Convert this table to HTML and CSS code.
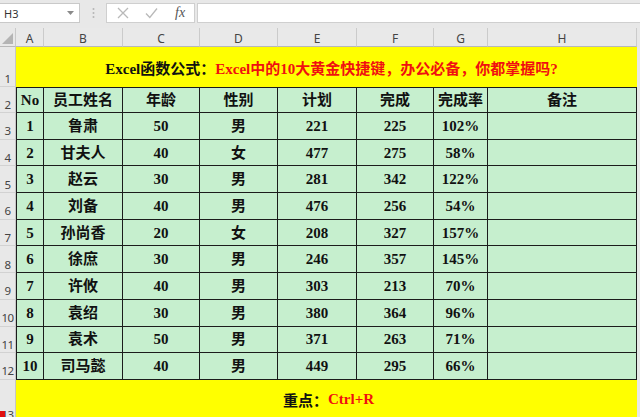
FILE: index.html
```html
<!DOCTYPE html>
<html lang="zh">
<head>
<meta charset="utf-8">
<title>Excel</title>
<link rel="stylesheet" href="styles.css">
</head>
<body>
<div class="app">
  <div class="formula-bar">
    <div class="namebox"><span>H3</span>
      <svg class="dd" width="7" height="5" viewBox="0 0 7 5"><polygon points="0,0 7,0 3.5,4" fill="#8a8a8a"/></svg>
    </div>
    <div class="grip">
      <svg width="3" height="12" viewBox="0 0 3 12"><circle cx="1.5" cy="2" r="1" fill="#b5b5b5"/><circle cx="1.5" cy="6" r="1" fill="#b5b5b5"/><circle cx="1.5" cy="10" r="1" fill="#b5b5b5"/></svg>
    </div>
    <div class="fx-box">
      <svg class="ico" width="12" height="12" viewBox="0 0 12 12"><path d="M1 1 L11 11 M11 1 L1 11" stroke="#b9b9b9" stroke-width="1.3" fill="none"/></svg>
      <svg class="ico" width="13" height="12" viewBox="0 0 13 12"><path d="M1 6.5 L4.8 10.5 L12 1.5" stroke="#b9b9b9" stroke-width="1.3" fill="none"/></svg>
      <span class="fx">fx</span>
    </div>
    <div class="input"></div>
  </div>

  <div class="sheet">
    <div class="corner"><svg width="11" height="11" viewBox="0 0 11 11"><polygon points="11,0 11,11 0,11" fill="#b4b4b4"/></svg></div>
    <div class="ch">A</div><div class="ch">B</div><div class="ch">C</div><div class="ch">D</div><div class="ch">E</div><div class="ch">F</div><div class="ch">G</div><div class="ch">H</div>

    <div class="rh">1</div>
    <div class="title span"><span class="k">Excel函数公式：</span><span class="r">Excel中的10大黄金快捷键，办公必备，你都掌握吗?</span></div>

    <div class="rh">2</div>
    <div class="c first top">No</div><div class="c top">员工姓名</div><div class="c top">年龄</div><div class="c top">性别</div><div class="c top">计划</div><div class="c top">完成</div><div class="c top">完成率</div><div class="c top">备注</div>

    <div class="rh">3</div>
    <div class="c first">1</div><div class="c">鲁肃</div><div class="c">50</div><div class="c">男</div><div class="c">221</div><div class="c">225</div><div class="c">102%</div><div class="c"></div>
    <div class="rh">4</div>
    <div class="c first">2</div><div class="c">甘夫人</div><div class="c">40</div><div class="c">女</div><div class="c">477</div><div class="c">275</div><div class="c">58%</div><div class="c"></div>
    <div class="rh">5</div>
    <div class="c first">3</div><div class="c">赵云</div><div class="c">30</div><div class="c">男</div><div class="c">281</div><div class="c">342</div><div class="c">122%</div><div class="c"></div>
    <div class="rh">6</div>
    <div class="c first">4</div><div class="c">刘备</div><div class="c">40</div><div class="c">男</div><div class="c">476</div><div class="c">256</div><div class="c">54%</div><div class="c"></div>
    <div class="rh">7</div>
    <div class="c first">5</div><div class="c">孙尚香</div><div class="c">20</div><div class="c">女</div><div class="c">208</div><div class="c">327</div><div class="c">157%</div><div class="c"></div>
    <div class="rh">8</div>
    <div class="c first">6</div><div class="c">徐庶</div><div class="c">30</div><div class="c">男</div><div class="c">246</div><div class="c">357</div><div class="c">145%</div><div class="c"></div>
    <div class="rh">9</div>
    <div class="c first">7</div><div class="c">许攸</div><div class="c">40</div><div class="c">男</div><div class="c">303</div><div class="c">213</div><div class="c">70%</div><div class="c"></div>
    <div class="rh">10</div>
    <div class="c first">8</div><div class="c">袁绍</div><div class="c">30</div><div class="c">男</div><div class="c">380</div><div class="c">364</div><div class="c">96%</div><div class="c"></div>
    <div class="rh">11</div>
    <div class="c first">9</div><div class="c">袁术</div><div class="c">50</div><div class="c">男</div><div class="c">371</div><div class="c">263</div><div class="c">71%</div><div class="c"></div>
    <div class="rh">12</div>
    <div class="c first">10</div><div class="c">司马懿</div><div class="c">40</div><div class="c">男</div><div class="c">449</div><div class="c">295</div><div class="c">66%</div><div class="c"></div>

    <div class="rh">13</div>
    <div class="title foot span"><span class="k">重点：</span><span class="r">Ctrl+R</span></div>
  </div>
  <div class="marker"></div>
</div>
</body>
</html>
```

FILE: styles.css
```css
* { box-sizing: border-box; }
html, body { margin: 0; padding: 0; }
body {
  width: 640px;
  height: 417px;
  overflow: hidden;
  background: #e8e8e8;
  font-family: "Noto Sans", "Noto Sans CJK SC", sans-serif;
}
.app { position: relative; width: 640px; height: 417px; overflow: hidden; }

.formula-bar {
  display: flex;
  align-items: flex-start;
  height: 28px;
  padding-top: 3px;
  background: #e8e8e8;
}
.namebox {
  width: 80px;
  height: 20px;
  background: #fff;
  border: 1px solid #c9c9c9;
  border-left: none;
  display: flex;
  align-items: center;
  justify-content: space-between;
  padding: 0 5px 0 4px;
  font-size: 11px;
  color: #333;
}
.namebox .dd { margin-top: 1px; }
.grip {
  width: 26px;
  height: 20px;
  display: flex;
  align-items: center;
  justify-content: center;
  padding-left: 1px;
}
.fx-box {
  width: 89px;
  height: 20px;
  background: #fff;
  border: 1px solid #cfcfcf;
  display: flex;
  align-items: center;
  padding-left: 10px;
  gap: 16px;
}
.fx {
  font-family: "Liberation Serif", serif;
  font-style: italic;
  font-size: 14px;
  color: #555;
  margin-left: 1px;
}
.input {
  flex: 1;
  height: 20px;
  margin-left: 2px;
  background: #fff;
  border: 1px solid #cfcfcf;
  border-right: none;
}

.sheet {
  display: grid;
  width: 637px;
  grid-template-columns: 16px 28px 79px 77px 78px 79px 77px 54px 149px;
  grid-template-rows: 19px 40px 26px repeat(10, 26.7px) 44px;
}
.corner {
  background: #e8e8e8;
  border-right: 1px solid #c9c9c9;
  border-bottom: 1px solid #b8b8b8;
  display: flex;
  align-items: flex-end;
  justify-content: flex-end;
  padding: 0 2px 2px 0;
}
.ch {
  background: #e9e9e9;
  border-right: 1px solid #cbcbcb;
  border-bottom: 1px solid #b8b8b8;
  color: #444;
  font-size: 12px;
  display: flex;
  align-items: center;
  justify-content: center;
  line-height: 1;
  padding-top: 4px;
}
.rh {
  background: #e8e8e8;
  border-right: 1px solid #c6c6c6;
  border-bottom: 1px solid #d2d2d2;
  color: #444;
  font-size: 11.5px;
  display: flex;
  align-items: flex-end;
  justify-content: center;
  line-height: 1;
  padding-bottom: 2px;
  letter-spacing: -0.5px;
}

.title {
  background: #ffff00;
  display: flex;
  align-items: center;
  justify-content: center;
  font-family: "Liberation Serif", "Noto Sans CJK SC", serif;
  font-weight: 700;
  font-size: 15px;
  padding-left: 10px;
}
.span { grid-column: 2 / 10; }
.foot { padding-left: 4px; padding-bottom: 4px; align-items: center; }
.k { color: #111; }
.r { color: #f01010; }

.c {
  background: #c6efce;
  border-right: 1px solid #1c1c1c;
  border-bottom: 1px solid #1c1c1c;
  display: flex;
  align-items: center;
  justify-content: center;
  font-family: "Liberation Serif", "Noto Sans CJK SC", serif;
  font-weight: 700;
  font-size: 15px;
  color: #111;
  padding-top: 1px;
  line-height: 1;
}
.c.first { border-left: 1px solid #1c1c1c; }
.c.top { border-top: 1px solid #1c1c1c; font-size: 15px; }

.marker {
  position: absolute;
  left: 0;
  top: 411px;
  width: 5px;
  height: 6px;
  background: #e01010;
}
```
